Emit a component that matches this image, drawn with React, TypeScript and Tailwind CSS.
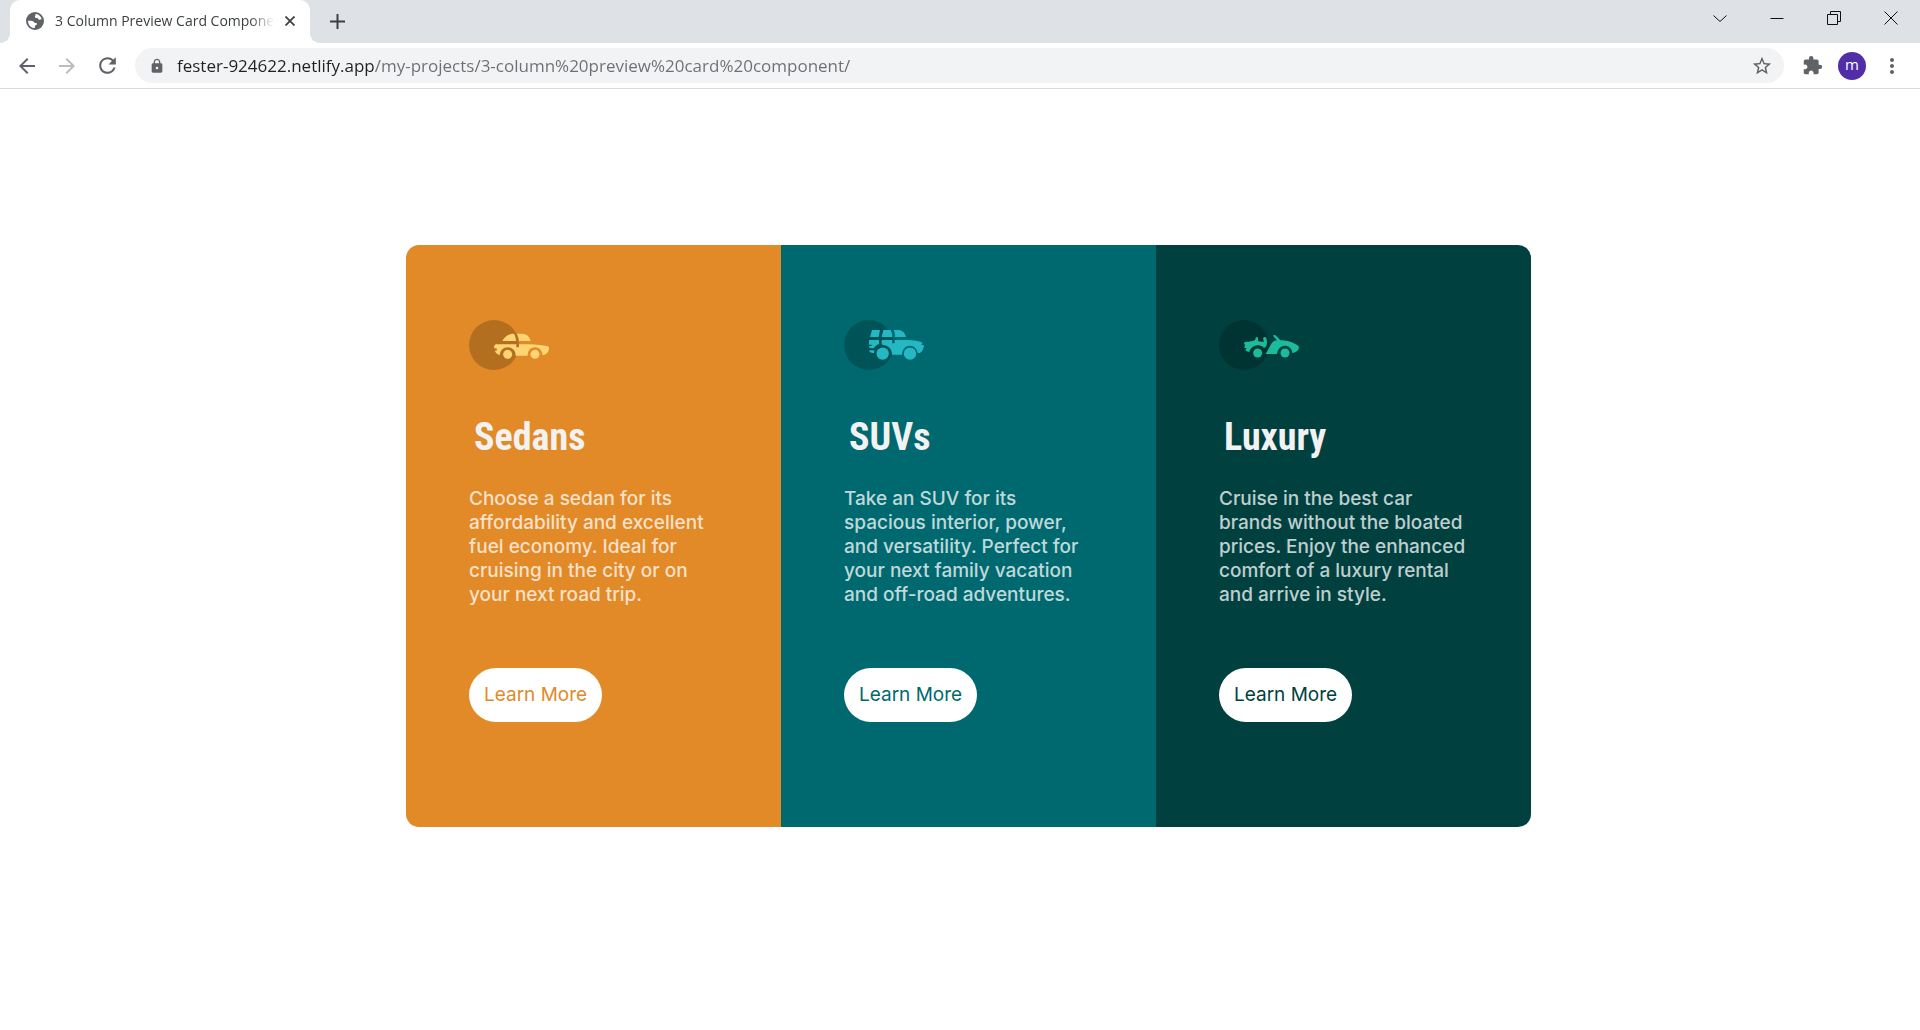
import type { ReactNode } from "react";
import {
  MdArrowBack,
  MdArrowForward,
  MdExtension,
  MdLock,
  MdMoreVert,
  MdRefresh,
  MdStarBorder,
} from "react-icons/md";

function GlobeIcon() {
  return (
    <svg viewBox="0 0 54 54" className="size-[18px] shrink-0" aria-hidden="true">
      <circle cx="27" cy="27" r="27" fill="#5f6368" />
      <path
        d="M28 6C37 6 45 12 47 21c-3 1-5 3-8 2-3-1-2-4-5-5-3-1-6 1-7-2-1-4 3-5 1-10ZM6 26c6 0 12 0 15 2 3 2 3 5 7 5 3 0 6 1 5 4-1 3-5 2-6 5-1 2 0 4-1 6C14 48 6 38 6 26Z"
        fill="#fff"
      />
    </svg>
  );
}

function IconButton({ label, children }: { label: string; children: ReactNode }) {
  return (
    <button type="button" aria-label={label} className="flex size-10 shrink-0 items-center justify-center text-[#5f6368]">
      {children}
    </button>
  );
}

function WindowButton({ label, d }: { label: string; d: string }) {
  return (
    <button type="button" aria-label={label} className="flex h-full w-[57px] items-center justify-center">
      <svg viewBox="0 0 14 14" className="size-[14px]" fill="none" stroke="#111" aria-hidden="true">
        <path d={d} />
      </svg>
    </button>
  );
}

function TabStrip() {
  return (
    <div className="flex h-[43px] bg-[#dee1e6]">
      <div className="relative ml-[10px] flex w-[300px] items-center rounded-t-[10px] bg-white pr-3 pb-[2px] pl-4">
        <span className="absolute bottom-0 -left-[10px] size-[10px] bg-[radial-gradient(circle_at_0_0,#dee1e6_10px,#fff_10px)]" />
        <span className="absolute -right-[10px] bottom-0 size-[10px] bg-[radial-gradient(circle_at_100%_0,#dee1e6_10px,#fff_10px)]" />
        <GlobeIcon />
        <span className="ml-[11px] min-w-0 flex-1 overflow-hidden whitespace-nowrap text-[14px] text-[#3c4043] [mask-image:linear-gradient(to_left,transparent,#000_24px)]">
          3 Column Preview Card Component
        </span>
        <button type="button" aria-label="Close tab" className="ml-2 flex size-4 items-center justify-center">
          <svg viewBox="0 0 10 10" className="size-[10px]" stroke="#3c4043" strokeWidth="1.8" aria-hidden="true">
            <path d="M0.5 0.5 9.5 9.5M9.5 0.5 0.5 9.5" />
          </svg>
        </button>
      </div>
      <button type="button" aria-label="New tab" className="ml-[17px] flex w-5 items-center justify-center">
        <svg viewBox="0 0 15 15" className="size-[15px]" stroke="#3c4043" strokeWidth="2" aria-hidden="true">
          <path d="M7.5 0V15M0 7.5H15" />
        </svg>
      </button>
      <div className="mr-px ml-auto flex h-9">
        <WindowButton label="Search tabs" d="M0.5 4.5 7 10.5 13.5 4.5" />
        <WindowButton label="Minimize" d="M0.5 7.5H13.5" />
        <WindowButton label="Restore" d="M0.5 3.5H10.5V13.5H0.5ZM3.5 3V0.5H13.5V10.5H11" />
        <WindowButton label="Close" d="M0.5 0.5 13.5 13.5M13.5 0.5 0.5 13.5" />
      </div>
    </div>
  );
}

function Toolbar() {
  return (
    <div className="flex h-[46px] items-center border-b border-[#d9dbde] bg-white pr-2 pl-[7px]">
      <IconButton label="Back"><MdArrowBack size={24} /></IconButton>
      <button type="button" disabled aria-label="Forward" className="flex size-10 shrink-0 items-center justify-center text-[#babcbe]">
        <MdArrowForward size={24} />
      </button>
      <IconButton label="Reload"><MdRefresh size={25} /></IconButton>
      <div className="ml-2 flex h-[35px] min-w-0 flex-1 items-center rounded-full bg-[#f1f3f4] pr-2 pl-[14px] text-[#5f6368]">
        <MdLock size={16} className="shrink-0" />
        <input
          type="text"
          aria-label="Address"
          defaultValue="fester-924622.netlify.app/my-projects/3-column%20preview%20card%20component/"
          className="ml-3 min-w-0 flex-1 bg-[linear-gradient(to_right,#202124_198px,#6b6f74_198px)] bg-clip-text text-[17px] text-transparent outline-none"
        />
        <button type="button" aria-label="Bookmark this page" className="flex size-7 items-center justify-center">
          <MdStarBorder size={22} />
        </button>
      </div>
      <div className="ml-2 flex items-center">
        <IconButton label="Extensions"><MdExtension size={21} /></IconButton>
        <button type="button" aria-label="Profile" className="mr-[6px] ml-[6px] flex size-7 items-center justify-center rounded-full bg-[#512da8] pb-[2px] text-[15px] text-white">
          m
        </button>
        <IconButton label="Menu"><MdMoreVert size={24} /></IconButton>
      </div>
    </div>
  );
}

function CarIcon({ color, children }: { color: string; children: ReactNode }) {
  return (
    <svg viewBox="0 0 240 150" className="h-[50px] w-20" fill={color} aria-hidden="true">
      <circle cx="75" cy="75" r="75" fill="#000" fillOpacity="0.2" />
      {children}
    </svg>
  );
}

const sedan = (
  <CarIcon color="#ffd473">
    <path d="M100 63C108 48 120 41 135 41C139 48 141 56 141 63ZM144 41H158C174 41 181 50 185 63H150C150 55 148 48 144 41Z" />
    <path d="M80 73H142V82H150V73H180C204 74 222 76 236 79C240 80 240 83 240 88C238 98 230 105 221 106C220 92 210 82 198 82C185 82 176 92 176 107H140C140 92 130 82 116 82C103 82 94 91 92 105C85 103 80 98 77 92H83V85H75C75 79 76 75 80 73Z" />
    <circle cx="116" cy="103" r="13.5" />
    <circle cx="198" cy="103" r="13.5" />
  </CarIcon>
);

const suv = (
  <CarIcon color="#25b7c3">
    <path d="M84 30H108L104 51H78ZM118 30H140C144 37 145 44 145 51H113ZM149 30H164C176 31 182 39 186 51H153C153 43 152 36 149 30Z" />
    <path d="M75 60H105V72C97 75 92 80 90 85H80L75 81V78H83V74H75ZM113 60H145V70H152V60H190C210 61 224 63 236 68L232 74L240 76C239 86 236 94 228 99H221C219 86 209 77 198 77C184 77 175 88 174 104H144C144 87 133 76 116 75L113 71ZM75 91H91L90 99C82 100 77 98 75 91Z" />
    <circle cx="116" cy="101" r="18.5" />
    <circle cx="198" cy="101" r="18.5" />
  </CarIcon>
);

const luxury = (
  <CarIcon color="#1bbc9b">
    <path d="M78 66C88 66 98 65 108 61L110 53C113 49 117 51 117 55V63C123 65 128 66 135 65L132 55C135 50 140 50 142 55C145 64 145 72 141 80L135 84C127 74 110 73 100 82C94 87 92 92 91 96C85 95 81 93 79 90L83 84H76L78 75C75 72 74 68 78 66Z" />
    <path d="M165 45C169 44 171 46 175 51L184 61C203 61 225 67 239 79C242 88 233 98 220 99C219 85 209 77 197 77C184 77 176 88 174 102H140L158 70C162 64 169 61 174 61L163 49C162 47 163 45 165 45Z" />
    <circle cx="116" cy="99" r="13.5" />
    <circle cx="198" cy="99" r="13.5" />
  </CarIcon>
);

const cards = [
  {
    title: "Sedans",
    icon: sedan,
    background: "bg-[#e28a28]",
    ink: "text-[#e28a28]",
    lines: ["Choose a sedan for its", "affordability and excellent", "fuel economy. Ideal for", "cruising in the city or on", "your next road trip."],
  },
  {
    title: "SUVs",
    icon: suv,
    background: "bg-[#00696f]",
    ink: "text-[#00696f]",
    lines: ["Take an SUV for its", "spacious interior, power,", "and versatility. Perfect for", "your next family vacation", "and off-road adventures."],
  },
  {
    title: "Luxury",
    icon: luxury,
    background: "bg-[#004140]",
    ink: "text-[#004140]",
    lines: ["Cruise in the best car", "brands without the bloated", "prices. Enjoy the enhanced", "comfort of a luxury rental", "and arrive in style."],
  },
];

export default function App() {
  return (
    <div className="min-h-screen bg-white font-['Open_Sans',sans-serif]">
      <header>
        <TabStrip />
        <Toolbar />
      </header>
      <main className="flex justify-center pt-[156px] pb-20 pl-[17px]">
        <div className="grid w-full max-w-[1125px] grid-cols-3 overflow-hidden rounded-[13px]">
          {cards.map((card) => (
            <section key={card.title} className={`${card.background} flex flex-col items-start px-[63px] pt-[75px] pb-[105px] font-[Inter,sans-serif]`}>
              {card.icon}
              <h2 className="mt-10 pl-[5px] font-['Roboto_Condensed',Roboto,sans-serif] text-[38px] leading-[54px] font-bold text-[#f2f2f2]">
                {card.title}
              </h2>
              <p className="mt-[23px] text-[19px] leading-6 font-medium whitespace-nowrap text-white/75">
                {card.lines.map((line) => (
                  <span key={line} className="block">{line}</span>
                ))}
              </p>
              <button type="button" className={`${card.ink} mt-[61px] h-[54px] rounded-full bg-white px-[15px] text-[19px]`}>
                Learn More
              </button>
            </section>
          ))}
        </div>
      </main>
    </div>
  );
}
